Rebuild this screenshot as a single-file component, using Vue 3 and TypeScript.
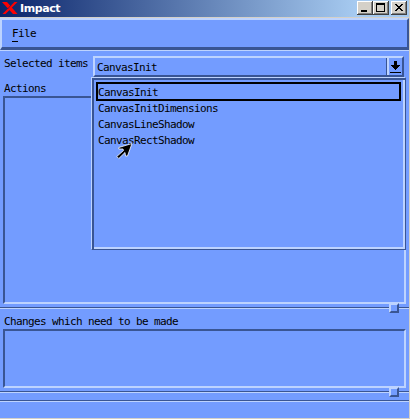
<script setup lang="ts">
import { ref } from 'vue'

const items: string[] = ['CanvasInit', 'CanvasInitDimensions', 'CanvasLineShadow', 'CanvasRectShadow']
const selected = ref<string>('CanvasInit')
</script>

<template>
  <div class="window">
    <header class="titlebar">
      <svg class="logo" width="16" height="12" viewBox="0 0 16 12">
        <path d="M0 0H5L15.5 12H11Z" fill="#f00" />
        <path d="M12.5 0H15.5L3.5 12H.5Z" fill="#f00" />
        <path d="M8.8 3.4L5.6 7" stroke="#0b256b" stroke-width="0.7" />
      </svg>
      <span class="title">Impact</span>
      <div class="controls">
        <button class="control" aria-label="Minimize">
          <svg width="16" height="14" shape-rendering="crispEdges"><path d="M4 9h6v2H4z" /></svg>
        </button>
        <button class="control" aria-label="Maximize">
          <svg width="16" height="14" shape-rendering="crispEdges"><path d="M3 2h9v9H3zM4 4v6h7V4z" fill-rule="evenodd" /></svg>
        </button>
        <button class="control close" aria-label="Close">
          <svg width="16" height="14" shape-rendering="crispEdges">
            <path d="M4 3h2v1h1v1h2V4h1V3h2v1h-1v1h-1v1H9v1h1v1h1v1h1v1h-2V9H9V8H7v1H6v1H4V9h1V8h1V7h1V6H6V5H5V4H4z" />
          </svg>
        </button>
      </div>
    </header>

    <nav class="menubar"><span class="menu"><u>F</u>ile</span></nav>
    <div class="rule"></div>

    <div class="select-row">
      <label class="label">Selected items</label>
      <div class="combo">
        <span class="value">{{ selected }}</span>
        <div class="arrow">
          <svg width="12" height="17" shape-rendering="crispEdges">
            <path d="M4 3h3v4h3v1H9v1H8v1H7v1H6v1H5v-1H4v-1H3V9H2V8H1V7h3zM0 14h11v1H0z" />
          </svg>
        </div>
        <ul class="dropdown">
          <li v-for="item in items" :key="item" :class="{ active: item === selected }" @click="selected = item">{{ item }}</li>
        </ul>
      </div>
    </div>

    <div class="label actions">Actions</div>
    <section class="panel main"></section>
    <div class="sash"><i class="handle"></i></div>
    <div class="label changes">Changes which need to be made</div>
    <section class="panel lower"></section>
    <div class="sash"><i class="handle"></i></div>
    <div class="rule status"></div>

    <svg class="pointer" width="20" height="20" viewBox="0 0 20 20">
      <path d="M16 2.5L2.8 6.5V8H7L7.5 9.5L.8 15.5L2.8 17.5L9 11.5L9.5 15H11.5Z" fill="#000" stroke="#fff" stroke-width="0.8" />
    </svg>
  </div>
</template>

<style>
body { margin: 0; overflow: hidden; }
</style>

<style scoped>
.window {
  --light: #bdd3ff;
  --dark: #395594;
  --face: #739cff;
  box-sizing: border-box;
  position: relative;
  display: flex;
  flex-direction: column;
  width: 410px;
  height: 419px;
  border-right: 1px solid #d4d0c8;
  border-bottom: 1px solid #d4d0c8;
  background: var(--face);
  color: #000;
  font: 11px/16px "DejaVu Sans Mono", monospace;
  letter-spacing: -0.622px;
  white-space: nowrap;
}
.titlebar {
  box-sizing: border-box;
  display: flex;
  height: 18px;
  padding: 1px 2px 0;
  border-bottom: 1px solid #d4d0c8;
  background: linear-gradient(90deg, #0a246a, #a6caf0 87%);
}
.logo { margin-top: 1px; }
.title {
  margin-left: 2px;
  color: #fff;
  font: bold 11px/16px "DejaVu Sans", sans-serif;
  letter-spacing: -0.4px;
}
.controls { display: flex; margin-left: auto; }
.control {
  width: 16px;
  height: 14px;
  padding: 0;
  border: 0;
  background: #d4d0c8;
  box-shadow: inset -1px -1px #404040, inset 1px 1px #fff, inset -2px -2px #808080;
}
.control svg { display: block; }
.close { margin-left: 2px; }
.menubar {
  box-sizing: border-box;
  height: 32px;
  padding: 6px 10px;
  border: 2px solid;
  border-bottom-width: 3px;
  border-color: var(--light) var(--dark) var(--dark) var(--light);
}
.menu { display: block; }
.menu u { display: inline-block; width: 6px; height: 15px; border-bottom: 1px solid #000; text-decoration: none; }
.rule { flex: none; height: 1px; background: var(--light); }
.select-row { display: flex; height: 28px; padding: 5px 5px 0 4px; box-sizing: border-box; }
.select-row .label { width: 89px; line-height: 15px; }
.combo {
  position: relative;
  box-sizing: border-box;
  display: flex;
  width: 311px;
  height: 21px;
  border: 2px solid;
  border-color: var(--light) var(--dark) var(--dark) var(--light);
}
.value { flex: 1; padding-left: 2px; line-height: 19px; }
.arrow { width: 12px; height: 17px; padding-left: 1px; border-left: 2px solid var(--light); box-shadow: -1px 0 var(--dark); }
.arrow svg { display: block; }
.dropdown {
  position: absolute;
  z-index: 1;
  box-sizing: border-box;
  left: -4px;
  top: 19px;
  width: 315px;
  height: 173px;
  margin: 0;
  padding: 4px;
  list-style: none;
  background: var(--face);
  border: 1px solid;
  border-color: var(--light) var(--dark) var(--dark) var(--light);
  box-shadow: inset 2px 2px var(--dark), inset -2px -2px var(--light);
}
.dropdown li { box-sizing: border-box; height: 16px; padding-left: 2px; line-height: 16px; }
.dropdown .active { height: 19px; padding-left: 0; border: 2px solid #000; line-height: 17px; }
.actions { height: 17px; padding-left: 4px; line-height: 19px; }
.panel {
  box-sizing: border-box;
  flex: none;
  margin: 0 3px;
  border: 2px solid;
  border-color: var(--dark) var(--light) var(--light) var(--dark);
}
.main { height: 208px; }
.lower { height: 59px; }
.sash {
  position: relative;
  box-sizing: border-box;
  flex: none;
  height: 2px;
  margin-top: 3px;
  border-top: 1px solid var(--dark);
  border-bottom: 1px solid var(--light);
}
.handle {
  position: absolute;
  box-sizing: border-box;
  right: 10px;
  top: -5px;
  width: 10px;
  height: 10px;
  border: 2px solid;
  border-color: var(--light) var(--dark) var(--dark) var(--light);
  background: var(--face);
}
.changes { height: 20px; padding-left: 4px; line-height: 25px; }
.status { margin-top: 7px; border-top: 1px solid var(--dark); }
.pointer { position: absolute; z-index: 2; left: 116px; top: 141px; }
</style>
